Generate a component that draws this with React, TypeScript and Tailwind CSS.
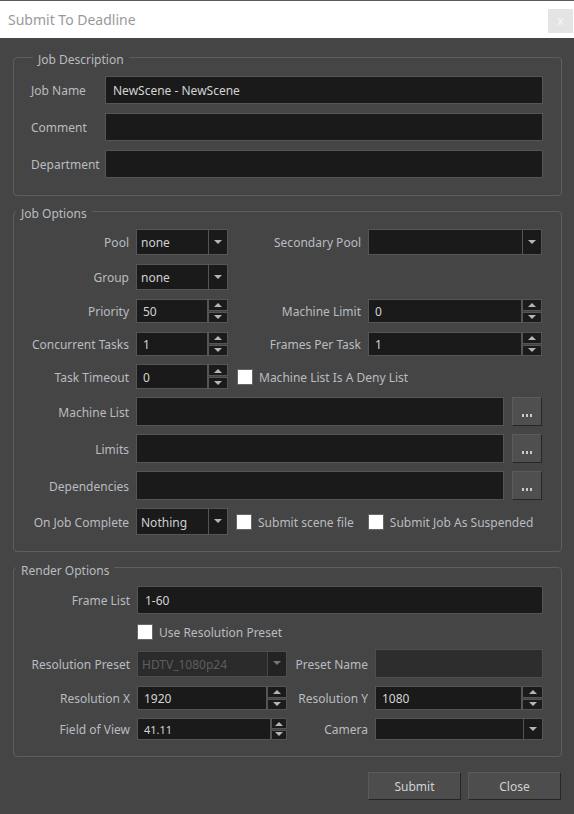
import React from 'react';

const field = 'bg-[#1a1a1a] border border-[#555]';

function Arrow({ up = false, dim = false }: { up?: boolean; dim?: boolean }) {
  return (
    <svg width="8" height="5" viewBox="0 0 8 5" className="block">
      <path d={up ? 'M0 5 L4 1 L8 5 Z' : 'M0 0 L8 0 L4 4 Z'} fill={dim ? '#777' : '#b5b5b5'} />
    </svg>
  );
}

function Group({ title, legendOffset, className = '', children }: { title: string; legendOffset: string; className?: string; children: React.ReactNode }) {
  return (
    <div className={`border border-[#5e5e5e] rounded-[4px] ${className}`}>
      <div className={`${legendOffset} ml-[2px] w-fit px-[5px] bg-[#454545] leading-[14px] text-[12px] text-[#b9bcc0]`}>{title}</div>
      {children}
    </div>
  );
}

function TextBox({ value = '', disabled = false, className = '' }: { value?: string; disabled?: boolean; className?: string }) {
  return (
    <div
      className={`h-full flex items-center px-[7px] pt-[2px] border ${
        disabled ? 'bg-[#2d2d2d] border-[#4e4e4e]' : 'bg-[#1a1a1a] border-[#555]'
      } text-[#d4d4d4] ${className}`}
    >
      {value}
    </div>
  );
}

function Combo({ value = '', disabled = false, className = '' }: { value?: string; disabled?: boolean; className?: string }) {
  return (
    <div className={`h-full flex border ${disabled ? 'bg-[#2b2b2b] border-[#4e4e4e] text-[#5e5e5e]' : 'bg-[#1a1a1a] border-[#555] text-[#d0d0d0]'} ${className}`}>
      <div className="flex-1 flex items-center px-[4px] pt-[2px]">{value}</div>
      <div className={`w-[19px] flex items-center justify-center border-l ${disabled ? 'border-[#444] bg-[#232323]' : 'border-[#555]'}`}>
        <Arrow dim={disabled} />
      </div>
    </div>
  );
}

function Spin({ value, className = '', btn = 'w-[20px]', small = false }: { value: string; className?: string; btn?: string; small?: boolean }) {
  return (
    <div className={`h-full flex ${className}`}>
      <div className={`flex-1 flex items-center px-[6px] pt-[2px] ${field} ${small ? 'text-[11px]' : ''} text-[#d4d4d4]`}>{value}</div>
      <div className={`${btn} flex flex-col gap-[1px] bg-[#444]`}>
        <div className="flex-1 flex items-center justify-center bg-[#1b1b1b] border border-[#555]">
          <Arrow up />
        </div>
        <div className="flex-1 flex items-center justify-center bg-[#1b1b1b] border border-[#555]">
          <Arrow />
        </div>
      </div>
    </div>
  );
}

function Check({ label, className = '' }: { label: string; className?: string }) {
  return (
    <div className={`flex items-center ${className}`}>
      <div className="w-[16px] h-[16px] bg-white border border-[#666]" />
      <span className="ml-[6px] pt-[2px] text-[#b9bcc0]">{label}</span>
    </div>
  );
}

function Dots() {
  return (
    <div className="w-[30px] h-full ml-[8px] bg-[#4f4f4f] border border-t-[#5c5c5c] border-l-[#5c5c5c] border-b-[#262626] border-r-[#262626] flex items-end justify-center pb-[8px]">
      <div className="flex gap-[2px]">
        <div className="w-[2px] h-[3px] bg-[#c4ccd6]" />
        <div className="w-[2px] h-[3px] bg-[#c4ccd6]" />
        <div className="w-[2px] h-[3px] bg-[#c4ccd6]" />
      </div>
    </div>
  );
}

function Lbl({ text, w, left = false }: { text: string; w: string; left?: boolean }) {
  return <div className={`${w} shrink-0 pt-[2px] ${left ? 'text-left' : 'text-right pr-[7px]'} text-[#b9bcc0] whitespace-nowrap`}>{text}</div>;
}

function PushButton({ text }: { text: string }) {
  return (
    <div className="w-[93px] h-[28px] flex items-center justify-center pt-[2px] bg-[#4d4d4d] border border-t-[#5a5a5a] border-l-[#5a5a5a] border-b-[#252525] border-r-[#252525] text-[#d2d2d2]">
      {text}
    </div>
  );
}

export default function App() {
  const row = 'flex items-center';
  return (
    <div className="w-[574px] h-[814px] bg-[#454545] text-[12px] overflow-hidden" style={{ fontFamily: '"Segoe UI", "Noto Sans", sans-serif' }}>
      {/* title bar */}
      <div className="h-[38px] bg-white border-t border-[#5a5a5a] flex items-start justify-between">
        <div className="pl-[8px] pt-[9px] text-[14px] leading-[20px] text-[#999]">Submit To Deadline</div>
        <div className="mt-[8px] mr-[1px] w-[25px] h-[24px] bg-[#e4e4e4] flex items-center justify-center text-[#f8f8f8] text-[12px]">x</div>
      </div>

      <div className="pl-[13px] pr-[12px] pt-[19px]">
        {/* Job Description */}
        <Group title="Job Description" legendOffset="-mt-[5px]" className="pl-[17px] pr-[18px] pb-[17px]">
          <div className={`${row} h-[28px] mt-[9px]`}>
            <Lbl text="Job Name" w="w-[74px]" left />
            <TextBox value="NewScene - NewScene" className="flex-1" />
          </div>
          <div className={`${row} h-[28px] mt-[9px]`}>
            <Lbl text="Comment" w="w-[74px]" left />
            <TextBox className="flex-1" />
          </div>
          <div className={`${row} h-[28px] mt-[9px]`}>
            <Lbl text="Department" w="w-[74px]" left />
            <TextBox className="flex-1" />
          </div>
        </Group>

        {/* Job Options */}
        <Group title="Job Options" legendOffset="-mt-[5px]" className="mt-[15px] pr-[19px] pb-[16px]">
          <div className={`${row} h-[26px] mt-[8px]`}>
            <Lbl text="Pool" w="w-[122px]" />
            <Combo value="none" className="w-[92px]" />
            <Lbl text="Secondary Pool" w="w-[140px]" />
            <Combo className="flex-1" />
          </div>
          <div className={`${row} h-[26px] mt-[9px]`}>
            <Lbl text="Group" w="w-[122px]" />
            <Combo value="none" className="w-[92px]" />
          </div>
          <div className={`${row} h-[24px] mt-[9px]`}>
            <Lbl text="Priority" w="w-[122px]" />
            <Spin value="50" className="w-[92px]" />
            <Lbl text="Machine Limit" w="w-[140px]" />
            <Spin value="0" className="flex-1" />
          </div>
          <div className={`${row} h-[24px] mt-[9px]`}>
            <Lbl text="Concurrent Tasks" w="w-[122px]" />
            <Spin value="1" className="w-[92px]" />
            <Lbl text="Frames Per Task" w="w-[140px]" />
            <Spin value="1" className="flex-1" />
          </div>
          <div className={`${row} h-[25px] mt-[8px]`}>
            <Lbl text="Task Timeout" w="w-[122px]" />
            <Spin value="0" className="w-[92px]" />
            <Check label="Machine List Is A Deny List" className="ml-[9px]" />
          </div>
          <div className={`${row} h-[29px] mt-[8px]`}>
            <Lbl text="Machine List" w="w-[122px]" />
            <TextBox className="flex-1" />
            <Dots />
          </div>
          <div className={`${row} h-[29px] mt-[8px]`}>
            <Lbl text="Limits" w="w-[122px]" />
            <TextBox className="flex-1" />
            <Dots />
          </div>
          <div className={`${row} h-[29px] mt-[8px]`}>
            <Lbl text="Dependencies" w="w-[122px]" />
            <TextBox className="flex-1" />
            <Dots />
          </div>
          <div className={`${row} h-[27px] mt-[8px]`}>
            <Lbl text="On Job Complete" w="w-[122px]" />
            <Combo value="Nothing" className="w-[92px]" />
            <Check label="Submit scene file" className="ml-[8px]" />
            <Check label="Submit Job As Suspended" className="ml-[14px]" />
          </div>
        </Group>

        {/* Render Options */}
        <Group title="Render Options" legendOffset="-mt-[4px]" className="mt-[15px] pr-[18px] pb-[16px]">
          <div className={`${row} h-[28px] mt-[8px]`}>
            <Lbl text="Frame List" w="w-[123px]" />
            <TextBox value="1-60" className="flex-1" />
          </div>
          <div className={`${row} h-[16px] mt-[10px]`}>
            <div className="w-[123px]" />
            <Check label="Use Resolution Preset" />
          </div>
          <div className={`${row} h-[29px] mt-[9px]`}>
            <Lbl text="Resolution Preset" w="w-[123px]" />
            <div className="w-[150px] h-[26px]">
              <Combo value="HDTV_1080p24" disabled className="w-full" />
            </div>
            <Lbl text="Preset Name" w="w-[88px]" />
            <TextBox disabled className="flex-1" />
          </div>
          <div className={`${row} h-[24px] mt-[8px]`}>
            <Lbl text="Resolution X" w="w-[123px]" />
            <Spin value="1920" className="w-[150px]" />
            <Lbl text="Resolution Y" w="w-[88px]" />
            <Spin value="1080" className="flex-1" btn="w-[21px]" />
          </div>
          <div className={`${row} h-[22px] mt-[8px]`}>
            <Lbl text="Field of View" w="w-[123px]" />
            <Spin value="41.11" className="w-[150px]" btn="w-[16px]" small />
            <Lbl text="Camera" w="w-[88px]" />
            <Combo className="flex-1" />
          </div>
        </Group>

        <div className="mt-[15px] flex justify-end gap-[7px] pr-[1px]">
          <PushButton text="Submit" />
          <PushButton text="Close" />
        </div>
      </div>
    </div>
  );
}
